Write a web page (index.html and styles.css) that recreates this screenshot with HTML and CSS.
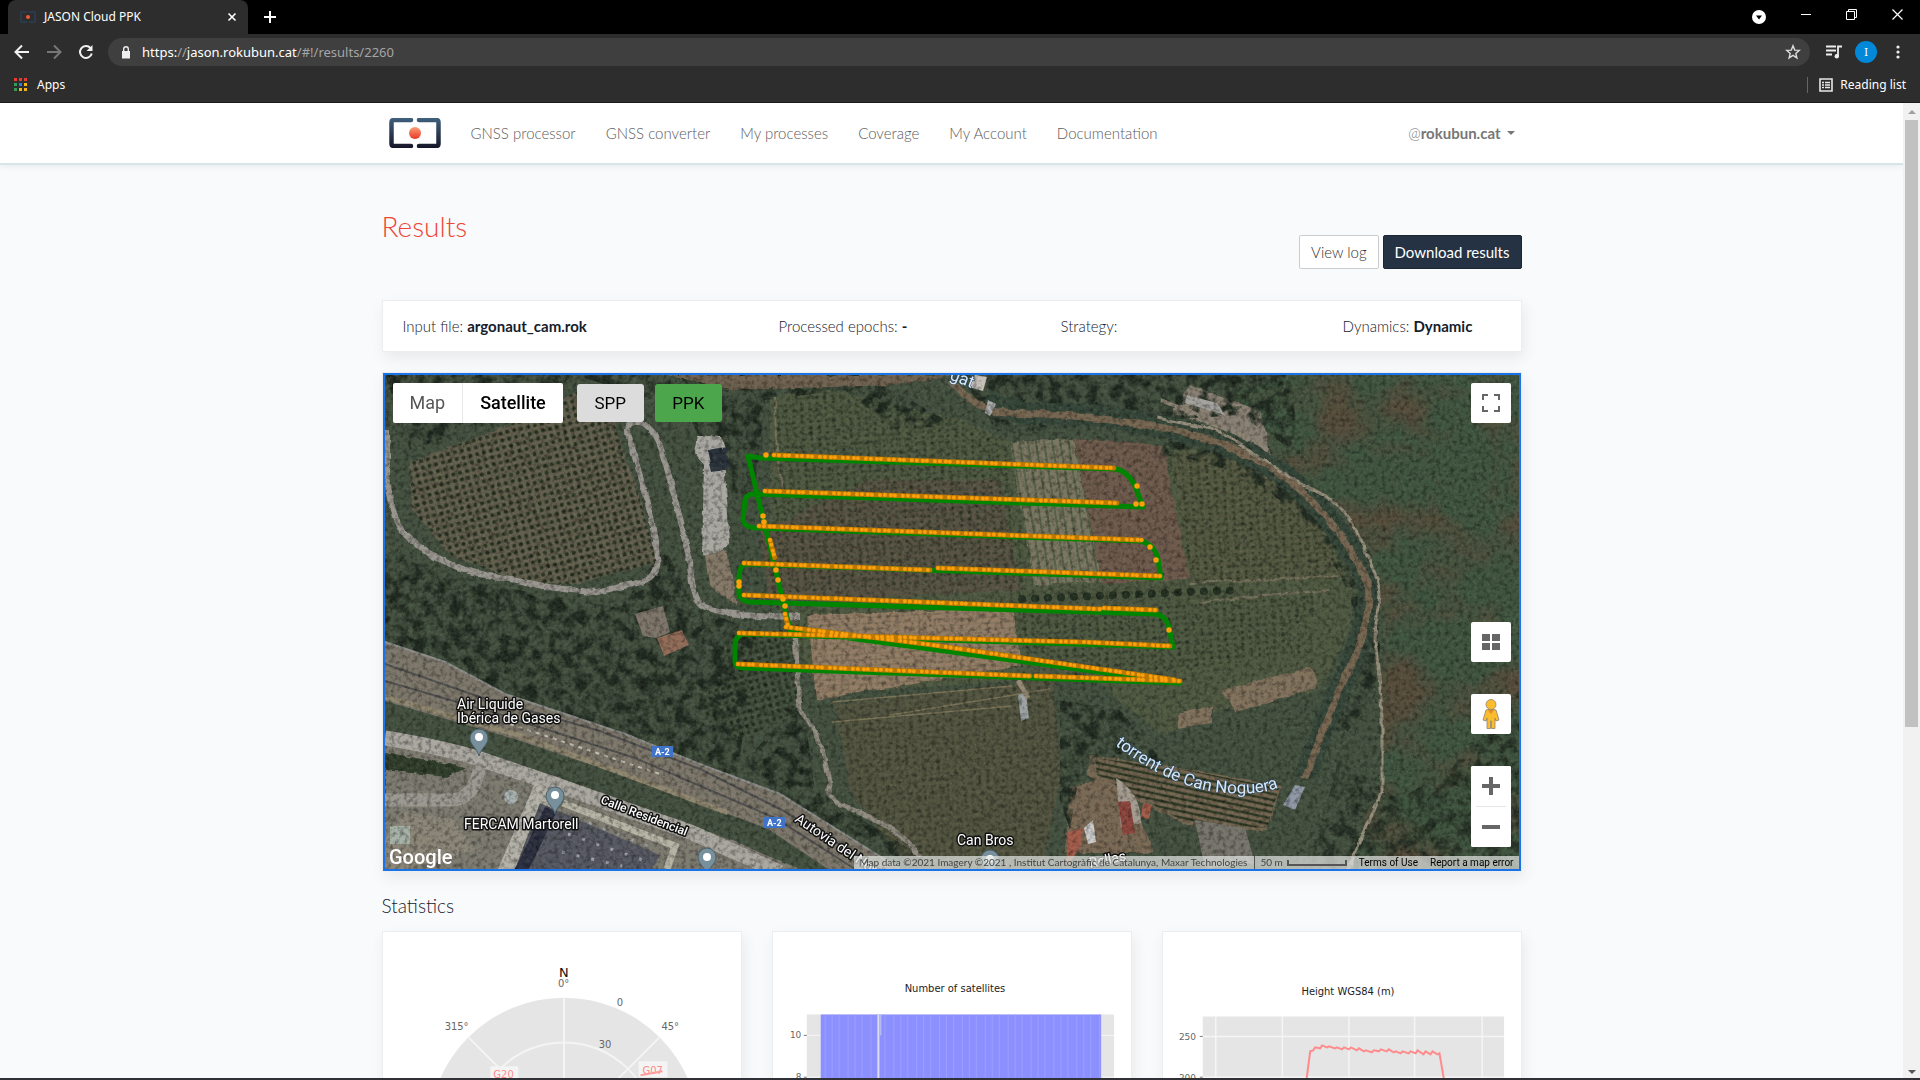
FILE: index.html
```html
<!DOCTYPE html>
<html lang="en">
<head>
<meta charset="utf-8">
<title>JASON Cloud PPK</title>
<link rel="stylesheet" href="styles.css">
</head>
<body>
<header class="browser">
  <div class="tabstrip">
    <div class="tab">
      <svg class="favicon" viewBox="0 0 16 12"><path d="M7 1H1v10h6M9 1h6v10H9" fill="none" stroke="#2b3a4a" stroke-width="2"/><circle cx="8" cy="6" r="2" fill="#f0563a"/></svg>
      <span class="tab-title">JASON Cloud PPK</span>
      <button class="icon-btn" aria-label="Close tab"><svg width="10" height="10" viewBox="0 0 10 10"><path d="M1.5 1.5l7 7M8.500 1.500l-7 7" stroke="#fff" stroke-width="1.600"/></svg></button>
    </div>
    <button class="icon-btn new-tab" aria-label="New tab"><svg width="14" height="14" viewBox="0 0 14 14"><path d="M7 1v12M1 7h12" stroke="#fff" stroke-width="2"/></svg></button>
    <div class="window-buttons">
      <button class="icon-btn" aria-label="Search tabs"><svg width="14" height="14" viewBox="0 0 14 14"><circle cx="7" cy="7" r="7" fill="#fff"/><path d="M4 5.500h6L7 9.500z" fill="#000"/></svg></button>
      <button class="icon-btn raised" aria-label="Minimise"><svg width="10" height="10" viewBox="0 0 10 10"><path d="M0 5.500h10" stroke="#fff"/></svg></button>
      <button class="icon-btn raised" aria-label="Restore"><svg width="11" height="11" viewBox="0 0 11 11"><path d="M.5 2.500h8v8h-8zM2.500 2.500v-2h8v8h-2" fill="none" stroke="#fff"/></svg></button>
      <button class="icon-btn raised" aria-label="Close"><svg width="11" height="11" viewBox="0 0 11 11"><path d="M.5.5l10 10M10.500.5l-10 10" stroke="#fff" stroke-width="1.200"/></svg></button>
    </div>
  </div>
  <div class="toolbar">
    <button class="icon-btn" aria-label="Back"><svg width="16" height="16" viewBox="0 0 16 16"><path d="M15 8H2M8 1.500L1.500 8 8 14.500" fill="none" stroke="#f1f1f1" stroke-width="2"/></svg></button>
    <button class="icon-btn" aria-label="Forward"><svg width="16" height="16" viewBox="0 0 16 16"><path d="M1 8h13M8 1.500L14.500 8 8 14.500" fill="none" stroke="#777" stroke-width="2"/></svg></button>
    <button class="icon-btn" aria-label="Reload"><svg width="16" height="16" viewBox="0 0 16 16"><path d="M13.800 9.500A6 6 0 1 1 12.500 4" fill="none" stroke="#f1f1f1" stroke-width="2"/><path d="M14.500 1v6h-6z" fill="#f1f1f1"/></svg></button>
    <div class="omnibox">
      <svg width="10" height="13" viewBox="0 0 10 13"><path d="M1 5h8v7.500H1z" fill="#eee"/><path d="M2.700 5V3a2.300 2.300 0 0 1 4.600 0v2" fill="none" stroke="#eee" stroke-width="1.400"/></svg>
      <span class="url">https:<i>//</i>jason.rokubun.cat<i>/#!/results/2260</i></span>
      <button class="icon-btn" aria-label="Bookmark"><svg width="16" height="16" viewBox="0 0 16 16"><path d="M8 1.800l1.700 4.300 4.600.3-3.500 3 1.100 4.500L8 11.400l-3.900 2.500 1.100-4.500-3.500-3 4.600-.3z" fill="none" stroke="#ddd" stroke-width="1.400"/></svg></button>
    </div>
    <button class="icon-btn" aria-label="Media"><svg width="16" height="14" viewBox="0 0 16 14"><path d="M0 1.500h10M0 5.500h10M0 9.500h6M12 11V1.500h4" fill="none" stroke="#eee" stroke-width="1.800"/><circle cx="10.800" cy="11.300" r="2.200" fill="#eee"/></svg></button>
    <button class="avatar" aria-label="Profile">I</button>
    <button class="icon-btn" aria-label="Menu"><svg width="4" height="14" viewBox="0 0 4 14"><g fill="#eee"><circle cx="2" cy="2" r="1.600"/><circle cx="2" cy="7" r="1.600"/><circle cx="2" cy="12" r="1.600"/></g></svg></button>
  </div>
  <div class="bookmarks">
    <a href="#apps" class="bookmark"><svg width="14" height="14" viewBox="0 0 14 14"><path d="M0 0h3v3H0zM5 0h3v3H5zM10 0h3v3h-3z" fill="#ea3a33"/><path d="M0 5h3v3H0zM0 10h3v3H0z" fill="#2fa04f"/><path d="M5 5h3v3H5z" fill="#2a7de8"/><path d="M10 5h3v3h-3zM5 10h3v3H5zM10 10h3v3h-3z" fill="#f8b312"/></svg>Apps</a>
    <a href="#reading" class="bookmark reading"><svg width="14" height="14" viewBox="0 0 14 14"><path d="M1 1h12v12H1z" fill="none" stroke="#e8e8e8" stroke-width="1.600"/><path d="M3 4.500h2M3 7h2M3 9.500h2M6 4.500h5M6 7h5M6 9.500h5" stroke="#e8e8e8" stroke-width="1.500"/></svg>Reading list</a>
  </div>
</header>

<div class="viewport">
<div class="page">
  <nav class="navbar">
    <div class="container nav-row">
      <a href="#home" class="brand" aria-label="JASON"><svg width="52" height="30" viewBox="0 0 52 30">
        <defs><linearGradient id="lg" x1="0" y1="0" x2="0" y2="30" gradientUnits="userSpaceOnUse"><stop offset="0" stop-color="#40617d"/><stop offset="1" stop-color="#161628"/></linearGradient><linearGradient id="dg" x1="0" y1="0" x2="0" y2="1"><stop offset="0" stop-color="#f7a075"/><stop offset="1" stop-color="#ea3624"/></linearGradient></defs>
        <path d="M22 2H5Q2.500 2 2.500 4.500v21Q2.500 28 5 28h17M30 2h17q2.500 0 2.500 2.500v21q0 2.500-2.500 2.500H30" fill="none" stroke="url(#lg)" stroke-width="4.500" stroke-linecap="round"/><circle cx="26" cy="15" r="6" fill="url(#dg)"/></svg></a>
      <a href="#processor">GNSS processor</a>
      <a href="#converter">GNSS converter</a>
      <a href="#processes">My processes</a>
      <a href="#coverage">Coverage</a>
      <a href="#account">My Account</a>
      <a href="#docs">Documentation</a>
      <button class="user">@<b>rokubun.cat</b><span class="caret"></span></button>
    </div>
  </nav>

  <main class="container">
    <h1>Results</h1>
    <div class="actions"><button class="btn">View log</button><button class="btn btn-dark">Download results</button></div>
    <section class="card info">
      <div>Input file: <b>argonaut_cam.rok</b></div>
      <div>Processed epochs: <b>-</b></div>
      <div>Strategy:</div>
      <div>Dynamics: <b>Dynamic</b></div>
    </section>

    <section class="card map-card">
     <div class="map">
      <svg class="terrain" viewBox="385 375 1134 494" preserveAspectRatio="xMidYMid slice">
        <defs>
          <filter id="grain" x="0" y="0" width="100%" height="100%"><feTurbulence type="fractalNoise" baseFrequency=".22" numOctaves="4" seed="4"/><feColorMatrix values="0 0 0 0 0  0 0 0 0 0  0 0 0 0 0  2.200 0 0 0 -.95"/></filter>
          <filter id="glow" x="0" y="0" width="100%" height="100%"><feTurbulence type="fractalNoise" baseFrequency=".3" numOctaves="3" seed="9"/><feColorMatrix values="0 0 0 0 .62  0 0 0 0 .66  0 0 0 0 .56  0 1.800 0 0 -.85"/></filter>
          <filter id="patches" x="0" y="0" width="100%" height="100%"><feTurbulence type="fractalNoise" baseFrequency=".014 .018" numOctaves="4" seed="7"/><feColorMatrix values="0 0 0 0 .38  0 0 0 0 .29  0 0 0 0 .23  0 3 0 0 -1.350"/><feComposite in2="SourceGraphic" operator="in"/></filter>
          <filter id="rough" x="-5%" y="-5%" width="110%" height="110%"><feTurbulence type="fractalNoise" baseFrequency=".08" numOctaves="3" seed="2"/><feDisplacementMap in="SourceGraphic" scale="5" xChannelSelector="R" yChannelSelector="G"/></filter>
          <filter id="woods" x="0" y="0" width="100%" height="100%"><feTurbulence type="fractalNoise" baseFrequency=".08" numOctaves="4" seed="21"/><feColorMatrix values="0 0 0 0 .13  0 0 0 0 .17  0 0 0 0 .13  4 0 0 0 -1.700"/><feComposite in2="SourceGraphic" operator="in"/></filter>
          <pattern id="trees" width="7" height="7" patternUnits="userSpaceOnUse" patternTransform="rotate(-14)"><circle cx="3" cy="3" r="2" fill="#27321f"/></pattern>
          <pattern id="treesb" width="8" height="6" patternUnits="userSpaceOnUse" patternTransform="rotate(-4)"><circle cx="3" cy="3" r="1.600" fill="#2a3723" opacity=".7"/></pattern>
          <pattern id="rows" width="8" height="10" patternUnits="userSpaceOnUse" patternTransform="rotate(-9)"><path d="M2 0v10" stroke="#566249" stroke-width="2"/></pattern>
          <pattern id="rowsb" width="10" height="6" patternUnits="userSpaceOnUse" patternTransform="rotate(-3)"><path d="M0 2h10" stroke="#3a442e" stroke-width="2"/></pattern>
          <pattern id="vine" width="9" height="6" patternUnits="userSpaceOnUse" patternTransform="rotate(12)"><path d="M0 2h9" stroke="#2e3824" stroke-width="2.500"/></pattern>
          <path id="pin" d="M0 18C-2 10-9 7-9 0a9 9 0 0 1 18 0C9 7 2 10 0 18z"/>
          <path id="torrent" d="M1115 745Q1175 790 1225 793T1290 780"/>
          <clipPath id="frame"><path d="M385 375h1134v494H385z"/></clipPath>
        </defs>
        <g clip-path="url(#frame)">
        <path d="M385 375h1134v494H385z" fill="#445140"/>
        <path d="M1290 375h229v494h-170l32-100 2-150-40-110-90-75-30-39z" fill="#405540"/>
        <path d="M1290 375h229v494h-170l32-100 2-150-40-110-90-75-30-39z" filter="url(#patches)" opacity=".7"/>
        <g filter="url(#rough)">
          <path d="M410 462l95-35 85-42 25 40 25 75 17 62-82 22-55-2-70-27-38-45z" fill="#635f4e"/>
          <path d="M770 400q20-12 60-10l130 30 60 25 60-5 85 5 70 10 95 85 25 45-5 45-30 60-100 20-60 25-70-60-270 20-50-100z" fill="#4f5942"/>
          <path d="M870 480l130 0 20 110-250 12-10-70z" fill="#585343"/>
          <path d="M1010 442l63-3 28 143-66 3z" fill="#7a7661"/>
          <path d="M1074 439l88 6 28 134-88 4z" fill="#6e5a4c"/>
          <path d="M1172 452l70 2 70 50 34 75-154 2z" fill="#555942"/>
          <path d="M808 615l205-7 8 58-205 34z" fill="#937d66"/>
          <path d="M835 704l218-25 8 100-20 92H910l-60-80z" fill="#545541"/>
          <path d="M1222 690l85-22q12 0 9 20l-80 24zM1178 713l34-8v18l-34 5z" fill="#82725d"/>
          <path d="M1090 755l100 15 92 15-15 45-80-5-100-50z" fill="#766853"/>
          <path d="M1070 788l50-15 35 80h-90z" fill="#7a6955"/>
          <path d="M385 740l150 30 170 60 100 41H385z" fill="#7e7b71"/>
          <path d="M385 752l80 15-18 10-62-7z" fill="#313e2b"/>
          <path d="M1190 385l70 25 12 45-40-22-60-20z" fill="#8a8174"/>
        </g>
        <path d="M410 462l95-35 85-42 25 40 25 75 17 62-82 22-55-2-70-27-38-45z" fill="url(#trees)"/>
        <path d="M778 402l52-10 130 28 45 25 20 138-255 10z" fill="url(#treesb)"/>
        <path d="M1010 442l63-3 28 143-66 3z" fill="url(#rows)"/>
        <path d="M1172 452l70 2 70 50 34 75-154 2z" fill="url(#treesb)"/>
        <path d="M1020 610l300-15-20 60-220 25-60-30z" fill="url(#treesb)"/>
        <path d="M735 630h55l10 80-60 30-40-30z" fill="url(#trees)"/>
        <path d="M835 704l218-25 8 100-20 92H910l-60-80z" fill="url(#treesb)" opacity=".6"/>
        <path d="M808 615l205-7 8 58-205 34z" fill="url(#rowsb)" opacity=".12"/>
        <path d="M1095 758l92 12 92 18-12 40-80-5-90-48z" fill="url(#vine)"/>
        <path d="M1018 592l230-9v14l-230 11z" fill="#4c563f"/><path d="M1022 599l220-9" stroke="#243022" stroke-width="8" stroke-dasharray="0 13" stroke-linecap="round"/>
        <path d="M832 702l180-16M832 722l180-16M890 715l160-26" stroke="#7b7458" stroke-width="1.500" fill="none"/>
        <g filter="url(#woods)" stroke="#000" fill="#000">
          <path d="M385 375h480l90 50-60 5-50-40-80 10-10 90-20 10-50-90-30-10-80-25-60 40-105 35z" stroke="none"/>
          <path d="M385 550l65 28 170 30 45-60 30 60 60 22-20 170-130-55-220-90z" stroke="none"/>
          <path d="M800 690q10 60 15 100l120 75-10 10-130-70-50-40z" stroke="none"/>
          <path d="M960 375h330l10 80-60-40-150 10-90 10zM1060 700l60 10 50 60-40-20-50 20-10 60-10-30z" stroke="none"/>
          <path d="M1160 445q120 10 180 110t0 170" fill="none" stroke-width="20"/>
          <path d="M1450 770l69-80v179h-210l30-110 60 40z" stroke="none" opacity=".8"/>
        </g>
        <g fill="none" filter="url(#rough)">
          <path d="M985 400q30 14 60 14 60 0 100 10 90 12 150 60 50 45 73 98 6 40-28 105-20 50-35 90" stroke="#36473a" stroke-width="22"/>
          <path d="M665 375h290l-60 10-160 5z" fill="#706250"/>
          <path d="M950 380q25 30 55 33 70 0 140 12 90 12 150 60 50 45 73 98 6 40-28 105-20 50-35 90" stroke="#766651" stroke-width="7"/>
          <path d="M387 430v40q2 50 20 65 30 35 110 46 50 10 80 11l45-10q18-8 15-25-5-50-25-110-10-25 5-25 15 0 25 30 15 50 28 110 2 40 15 45 35 12 95 9" stroke="#99958f" stroke-width="6"/>
          <path d="M795 632q2 40 5 78 25 30 30 75-5 10 10 20 60 20 80 52" stroke="#928d82" stroke-width="5"/>
          <path d="M1157 418l60 12 85 55q45 15 58 55 20 40 20 55-5 30-5 45 6 50 7 80v70q-20 50-35 80" stroke="#978f7c" stroke-width="3"/>
          <path d="M1160 400q90 35 108 50" stroke="#8d8475" stroke-width="4"/>
          <path d="M1190 583l150-7M1200 602l130-12M775 398q0 60 8 90" stroke="#74705b" stroke-width="2"/>
        </g>
        <path d="M385 642l60 20 60 32 120 40 80 32 75 28 120 75H828l-60-40-120-45-130-44-133-39z" fill="#7d776b"/>
        <path d="M385 697l133 38 130 48 80 30" stroke="#908770" stroke-width="5" fill="none"/>
        <path d="M385 664l95 33 120 34 100 38 80 40 100 60M385 681l120 35 130 42 140 60 80 51" stroke="#515050" stroke-width="2" fill="none"/>
        <path d="M385 642l60 20 60 32 120 40 80 32 75 28 120 75" stroke="#8d8d8a" stroke-width="2" fill="none"/>
        <path d="M510 724l150 50" stroke="#c2bfb4" stroke-width="2" stroke-dasharray="4 5"/>
        <path d="M385 738q60 10 95 21l80 27 130 46 90 40" stroke="#aba8a1" stroke-width="15" fill="none"/>
        <path d="M480 765q-5 35-30 35H385" stroke="#9c9992" stroke-width="13" fill="none"/>
        <path d="M405 812l50 8 20 30-70 19h-20v-30z" fill="#8c8679"/>
        <path d="M390 826h20v18h-20z" fill="#a7b3a9"/>
        <path d="M535 783l28 10-45 76h-20z" fill="#b5b3a9"/>
        <path d="M540 803l120 52-8 14H515z" fill="#565862"/><path d="M545 807l12 4-28 58h-14z" fill="#2b2f3f"/>
        <path d="M575 817l75 30M568 834l80 28M562 852l60 14" stroke="#a0a2a8" stroke-width="3" stroke-dasharray="3 12"/>
        <path d="M563 803l112 43-8 23" stroke="#b7b5a6" stroke-width="7" fill="none"/>
        <circle cx="511" cy="797" r="7" fill="#abb4b4"/>
        <g filter="url(#rough)"><path d="M697 435l24 2 4 12v23l5 70-16 15-12-2 2-90-10-12z" fill="#aaa8a2"/><path d="M707 450l20-3 2 22-17 3z" fill="#2a333c"/><path d="M705 555l22-5 10 55-28-20z" fill="#857968"/></g>
        <path d="M635 614l28-8 7 26-14 6-13-2z" fill="#7e756a"/><path d="M657 638l25-8 7 15-25 11z" fill="#926c58"/>
        <path d="M975 375l12 2-4 14-14-4z" fill="#c8c2bb"/><path d="M988 400l8 4-6 12-5-3z" fill="#aeb0af"/>
        <path d="M1018 695l8-2 3 25-8 3z" fill="#9da3a4"/><path d="M1018 680l10 18" stroke="#958974" stroke-width="5"/>
        <path d="M1116 778q25 15 25 45l-20 5-5-50z" fill="#a49c90"/><path d="M1118 802l12-1 5 32-12 2z" fill="#8f463e"/><path d="M1143 803l9 2-3 14-8-2zM1068 832l15-4-2 17-15 24z" fill="#a35b4a"/><path d="M1084 828l9-8 3 22-8 2z" fill="#ccc"/><path d="M1195 820l50 8 10 35-50 6z" fill="#77756c"/>
        <path d="M1295 785l10 2-10 23-12-5z" fill="#9099a6"/><path d="M1187 395l30 8 8 12-40-12z" fill="#a5a4a0"/>
        <path d="M385 375h1134v494H385z" filter="url(#grain)" opacity=".42"/>
        <path d="M385 375h1134v494H385z" filter="url(#glow)" opacity=".22"/>

        <path d="M748 456l12 2 355 11q12 1 20 17l8 21-388-13q-9 0-10 6l-2 20q1 7 12 8l385 13q15 3 18 18l3 19-415-14q-6 1-7 12v18q1 6 10 8l406 12q10 1 14 13l4 20-427-13q-11 0-11 12v15q0 7 10 7l435 15-390-53zM790 630l-42-174" fill="none" stroke="#008500" stroke-width="5" stroke-linejoin="round"/>
        <g fill="none" stroke-linecap="round">
          <path d="M774 455l341 13M765 491l353 12M759 526l383 14M744 563l187 7M938 568l222 8M744 595l356 14M1104 608l52 2M739 633l342 9M1084 642l87 4M738 664l292 12M1036 676l144 5M786 627l140 17 250 36M770 540l5 19M785 614l3 12" stroke="#bb7900" stroke-width="5" stroke-dasharray="0 2"/>
          <path d="M774 455l341 13M765 491l353 12M759 526l383 14M744 563l187 7M938 568l222 8M744 595l356 14M1104 608l52 2M739 633l342 9M1084 642l87 4M738 664l292 12M1036 676l144 5M786 627l140 17 250 36M770 540l5 19M785 614l3 12" stroke="#fb9f0b" stroke-width="4" stroke-dasharray="0 5 0 6 0 4 0 8"/>
          <path d="M766 455h0M1137 486h0M1136 504h0M1142 504h0M1150 547h0M1156 560h0M1169 630h0M739 582h0M739 586h0M763 516h0M764 522h0M776 570h0M778 580h0M783 599h0M785 606h0" stroke="#fb9f0b" stroke-width="5.500"/>
        </g>

        <g fill="#78909c" stroke="#4b5f69"><use href="#pin" x="479" y="738"/><use href="#pin" x="555" y="796"/><use href="#pin" x="707" y="857"/><use href="#pin" x="990" y="859"/></g>
        <g fill="#fff"><circle cx="479" cy="737" r="4"/><circle cx="555" cy="795" r="4"/><circle cx="707" cy="857" r="4"/><circle cx="990" cy="859" r="4"/></g>
        <g class="place">
          <text x="457" y="709">Air Liquide</text><text x="457" y="723">Ibérica de Gases</text>
          <text x="464" y="829">FERCAM Martorell</text><text x="957" y="845">Can Bros</text>
          <text class="street" transform="translate(600 803) rotate(21)">Calle Residencial</text>
          <text transform="translate(794 821) rotate(34)">Autovia del Nord</text>
          <text transform="translate(1090 868) rotate(-12)">Rellas</text>
        </g>
        <g class="water"><text><textPath href="#torrent">torrent de Can Noguera</textPath></text><text transform="translate(949 379) rotate(22)">gat</text></g>
        <g fill="#3f74c8"><rect x="652" y="746" width="21" height="11"/><rect x="764" y="817" width="21" height="11"/></g>
        <g class="shield"><text x="655" y="755">A-2</text><text x="767" y="826">A-2</text></g>
        <text class="google" x="389" y="864">Google</text>
        </g>
      </svg>
      <div class="map-top">
        <div class="map-type"><button>Map</button><button class="on">Satellite</button></div>
        <button class="mode">SPP</button><button class="mode ppk">PPK</button>
      </div>
      <button class="map-btn full" aria-label="Full screen"><svg width="18" height="18" viewBox="0 0 18 18"><path d="M1 6V1h5M12 1h5v5M17 12v5h-5M6 17H1v-5" fill="none" stroke="#666" stroke-width="2"/></svg></button>
      <div class="map-side">
        <button class="map-btn" aria-label="Imagery"><svg width="18" height="16" viewBox="0 0 18 16"><path d="M0 0h8v7H0zM10 0h8v7h-8zM0 9h8v7H0zM10 9h8v7h-8z" fill="#666"/></svg></button>
        <button class="map-btn" aria-label="Street View"><svg width="18" height="30" viewBox="0 0 18 30"><g fill="#fbbc2d" stroke="#8e8370" stroke-width=".8"><path d="M4 11Q9 9 14 11l3 10-3 1-1-3v10.500H9.500V22h-1v7.500H5V19l-1 3-3-1z"/><circle cx="9" cy="5.500" r="5"/></g><path d="M6 11h6l-3 4z" fill="#e58a26"/></svg></button>
        <div class="zoom"><button class="map-btn" aria-label="Zoom in"><svg width="18" height="18" viewBox="0 0 18 18"><path d="M9 0v18M0 9h18" stroke="#666" stroke-width="4"/></svg></button><hr><button class="map-btn" aria-label="Zoom out"><svg width="18" height="18" viewBox="0 0 18 18"><path d="M0 9h18" stroke="#666" stroke-width="4"/></svg></button></div>
      </div>
      <div class="attribution">
        <span>Map data ©2021 Imagery ©2021 , Institut Cartogràfic de Catalunya, Maxar Technologies</span>
        <span class="scale">50 m<i></i></span>
        <a href="#terms">Terms of Use</a><a href="#report">Report a map error</a>
      </div>
     </div>
    </section>

    <h2>Statistics</h2>
    <section class="stats">
      <div class="card chart"><svg viewBox="382 931 360 360">
        <circle cx="564" cy="1133" r="136" fill="#e5e5e5"/>
        <g fill="none" stroke="#f4f4f4" stroke-width="2"><circle cx="564" cy="1133" r="91"/><circle cx="564" cy="1133" r="45"/><path d="M564 997v272M468 1037l192 192M660 1037l-192 192M428 1133h272"/></g>
        <g class="ticks"><text class="north" x="559" y="976">N</text><text x="558" y="986">0°</text><text x="617" y="1005">0</text><text x="599" y="1048">30</text><text x="444" y="1030">315°</text><text x="662" y="1030">45°</text></g>
        <path d="M490 1066h28v16h-28zM639 1061h29v16h-29z" fill="#f4f4f4"/>
        <g class="sats"><text x="493" y="1078">G20</text><text x="643" y="1074">G07</text><path d="M641 1075l22-4" stroke="#ff9c9c" stroke-width="2"/></g>
      </svg></div>
      <div class="card chart"><svg viewBox="772 931 360 360">
        <defs><pattern id="bars" width="23" height="10" patternUnits="userSpaceOnUse"><path d="M3.500 0v10M10.500 0v10M19.500 0v10" stroke="#9b9eff"/></pattern></defs>
        <text class="title" x="955" y="991">Number of satellites</text>
        <path d="M806 1014h309v220H806z" fill="#e5e5e5"/><path d="M806 1035h309M806 1077h309" stroke="#f6f6f6"/>
        <path d="M820 1014h282v220H820z" fill="#8c90ff"/><path d="M820 1014h282v220H820z" fill="url(#bars)"/>
        <path d="M878 1014v220" stroke="#dcdcf0" stroke-width="2"/><path d="M880 1014v21" stroke="#b7b9f5" stroke-width="2"/>
        <path d="M803 1035h3M803 1077h3" stroke="#777"/>
        <g class="ticks small"><text x="789" y="1038">10</text><text x="795" y="1080">8</text></g>
      </svg></div>
      <div class="card chart"><svg viewBox="1162 931 360 360">
        <text class="title" x="1348" y="994">Height WGS84 (m)</text>
        <path d="M1202 1016h303v220h-303z" fill="#e5e5e5"/><path d="M1202 1036h303M1202 1077h303M1215 1016v220M1282 1016v220M1349 1016v220M1415 1016v220M1483 1016v220" stroke="#f5f5f5" stroke-width="1.500"/>
        <path d="M1199 1036h3M1199 1077h3" stroke="#777"/>
        <path d="M1306 1082l4-31 3-1 2-3 5 1 2-3 5 2 2-1 6 2 2-1 5 2 2-2 5 2 2-2 6 3 2-2 5 3 2-1 6 2 2-2 5 1 2-2 6 2 2-2 5 3 2-1 5 2 2-2 6 2 2-2 5 2 2-3 6 4 2-3 5 3 2-3 5 3 2-1 5 29" fill="none" stroke="#ff8c8c" stroke-width="2"/>
        <g class="ticks small"><text x="1178" y="1040">250</text><text x="1178" y="1081">200</text></g>
      </svg></div>
    </section>
  </main>
</div>
<div class="scrollbar"><span class="arrow up"></span><span class="thumb"></span><span class="arrow down"></span></div>
</div>
<div class="taskbar"></div>
</body>
</html>
```

FILE: styles.css
```css
* { box-sizing: border-box; }
body { margin: 0; height: 100vh; display: flex; flex-direction: column; overflow: hidden; font: 300 15px/20px Lato, "Open Sans", sans-serif; color: #15202c; background: #f9fafc; }
button { font: inherit; color: inherit; border: 0; padding: 0; margin: 0; background: none; }
a { color: inherit; text-decoration: none; }
svg { display: block; }
b { font-weight: 700; }

.browser { font-family: "Noto Sans", "Open Sans", sans-serif; font-weight: 400; color: #fff; background: #2d2d2d; border-bottom: 1px solid #1b1b1b; }
.icon-btn { display: flex; align-items: center; justify-content: center; }
.tabstrip { display: flex; align-items: center; height: 34px; background: #000; }
.tab { display: flex; align-items: center; width: 240px; height: 34px; margin-left: 8px; padding: 0 11px 0 12px; background: #2d2d2d; border-radius: 8px 8px 0 0; font-size: 12px; }
.favicon { width: 16px; height: 12px; margin-right: 8px; }
.tab-title { flex: 1; }
.new-tab { margin-left: 15px; }
.window-buttons { display: flex; align-items: center; gap: 35px; margin-left: auto; padding-right: 17px; }
.raised { margin-bottom: 6px; }
.toolbar { display: flex; align-items: center; height: 36px; gap: 16px; padding: 0 20px 0 14px; }
.omnibox { flex: 1; display: flex; align-items: center; height: 28px; margin-left: -2px; padding: 0 9px 0 13px; border-radius: 14px; background: #3f3f3f; }
.url { flex: 1; margin-left: 11px; font-size: 13px; }
.url i { font-style: normal; color: #a5a5a5; }
.avatar { width: 22px; height: 22px; margin: 0 3px 0 -3px; border-radius: 50%; background: #0288d8; font-size: 11px; line-height: 22px; }
.bookmarks { display: flex; align-items: center; justify-content: space-between; height: 32px; padding: 0 14px 2px; font-size: 12px; }
.bookmark { display: flex; align-items: center; gap: 9px; height: 16px; }
.reading { gap: 7px; padding-left: 11px; border-left: 1px solid #666; }

.viewport { flex: 1; min-height: 0; display: flex; }
.page { flex: 1; min-width: 0; overflow: hidden; }
.container { width: 1140px; max-width: 100%; margin: 0 auto; }
.navbar { background: #fff; border-bottom: 2px solid #d9e4e7; box-shadow: 0 2px 6px rgba(0, 0, 0, .06); }
.nav-row { display: flex; align-items: center; gap: 30px; height: 60px; padding: 0 7px; color: #5c5c5c; }
.user { display: flex; align-items: center; margin-left: auto; color: #777; }
.caret { margin-left: 6px; border: 4px solid transparent; border-top-color: #777; border-bottom: 0; }
h1 { margin: 45px 0 0; font-size: 28px; line-height: 32px; font-weight: 300; color: #ee4536; }
.actions { display: flex; justify-content: flex-end; gap: 4px; margin-top: -7px; }
.btn { height: 34px; padding: 0 11px; border: 1px solid #ccc; border-radius: 2px; background: #fff; color: #333; }
.btn-dark { background: #243243; border-color: #1b2634; color: #fff; font-weight: 400; }
.card { background: #fff; border: 1px solid #ebedef; box-shadow: 2px 6px 14px rgba(0, 0, 0, .07); }
.info { display: grid; grid-template-columns: 4fr 3fr 3fr 2fr; margin-top: 31px; padding: 15px 5px; }
.info div { padding: 0 15px; white-space: nowrap; }
.map-card { margin-top: 20px; }
.map { position: relative; height: 498px; border: 2px solid #1a73e8; overflow: hidden; font-family: Roboto, sans-serif; }
.terrain { width: 100%; height: 100%; }
.terrain filter { color-interpolation-filters: sRGB; }
.place text { font: 400 14px Roboto, sans-serif; fill: #fff; stroke: #111; stroke-width: 3px; paint-order: stroke; stroke-linejoin: round; }
.place .street { font-size: 12px; font-weight: 500; }
.water text { font: 400 17px Roboto, sans-serif; fill: #d3e8fb; stroke: #25405a; stroke-width: 1px; paint-order: stroke; }
.shield text { font: 700 9px Roboto, sans-serif; fill: #fff; }
.google { font: 500 20px Roboto, sans-serif; fill: #fff; }
.map-top { position: absolute; left: 8px; top: 8px; display: flex; align-items: center; font-size: 18px; font-weight: 400; color: #000; }
.map-type { display: flex; height: 40px; margin-right: 14px; background: #fff; border-radius: 2px; }
.map-type button { padding: 0 17px; color: #565656; }
.map-type .on { color: #000; font-weight: 500; border-left: 1px solid #e8e8e8; }
.mode { width: 67px; height: 38px; margin-right: 11px; border-radius: 3px; background: #dcdcdc; font-size: 17px; }
.ppk { background: #4ca64c; }
.map-btn { display: flex; align-items: center; justify-content: center; width: 40px; height: 40px; background: #fff; border-radius: 2px; }
.full { position: absolute; right: 8px; top: 8px; }
.map-side { position: absolute; right: 8px; bottom: 22px; display: flex; flex-direction: column; gap: 32px; }
.zoom { background: #fff; border-radius: 2px; }
.zoom hr { margin: 0 5px; border: 0; height: 1px; background: #e6e6e6; }
.attribution { position: absolute; right: 0; bottom: 0; display: flex; gap: 12px; height: 13px; padding: 0 5px; background: rgba(225, 228, 225, .72); font: 400 10px/13px Lato, sans-serif; color: #444; }
.attribution a { color: #000; font-family: Roboto, sans-serif; }
.scale { display: flex; align-items: center; margin-left: -5px; padding-left: 5px; border-left: 1px solid #555; }
.scale i { width: 60px; height: 6px; margin-left: 4px; border: 2px solid #555; border-top: 0; }
h2 { margin: 23px 0 14px; font-size: 19px; line-height: 22px; font-weight: 300; }
.stats { display: grid; grid-template-columns: repeat(3, 1fr); gap: 30px; }
.chart svg { width: 100%; }
.chart text { font-family: "DejaVu Sans", sans-serif; font-weight: 400; }
.ticks { font-size: 10px; fill: #666; }
.small { font-size: 9px; }
.chart .north { font-size: 13px; fill: #111; }
.sats { font-size: 10px; fill: #ff8a8a; }
.title { font-size: 10px; fill: #222; text-anchor: middle; }
.scrollbar { display: flex; flex-direction: column; align-items: center; width: 17px; padding: 7px 0 4px; background: #f1f1f1; }
.arrow { border: 4px solid transparent; }
.up { border-top: 0; border-bottom-color: #a0a0a0; }
.down { margin-top: auto; border-bottom: 0; border-top-color: #555; }
.thumb { width: 13px; height: 63%; margin-top: 6px; background: #c1c1c1; }
.taskbar { height: 2px; background: #2f3137; }
```
